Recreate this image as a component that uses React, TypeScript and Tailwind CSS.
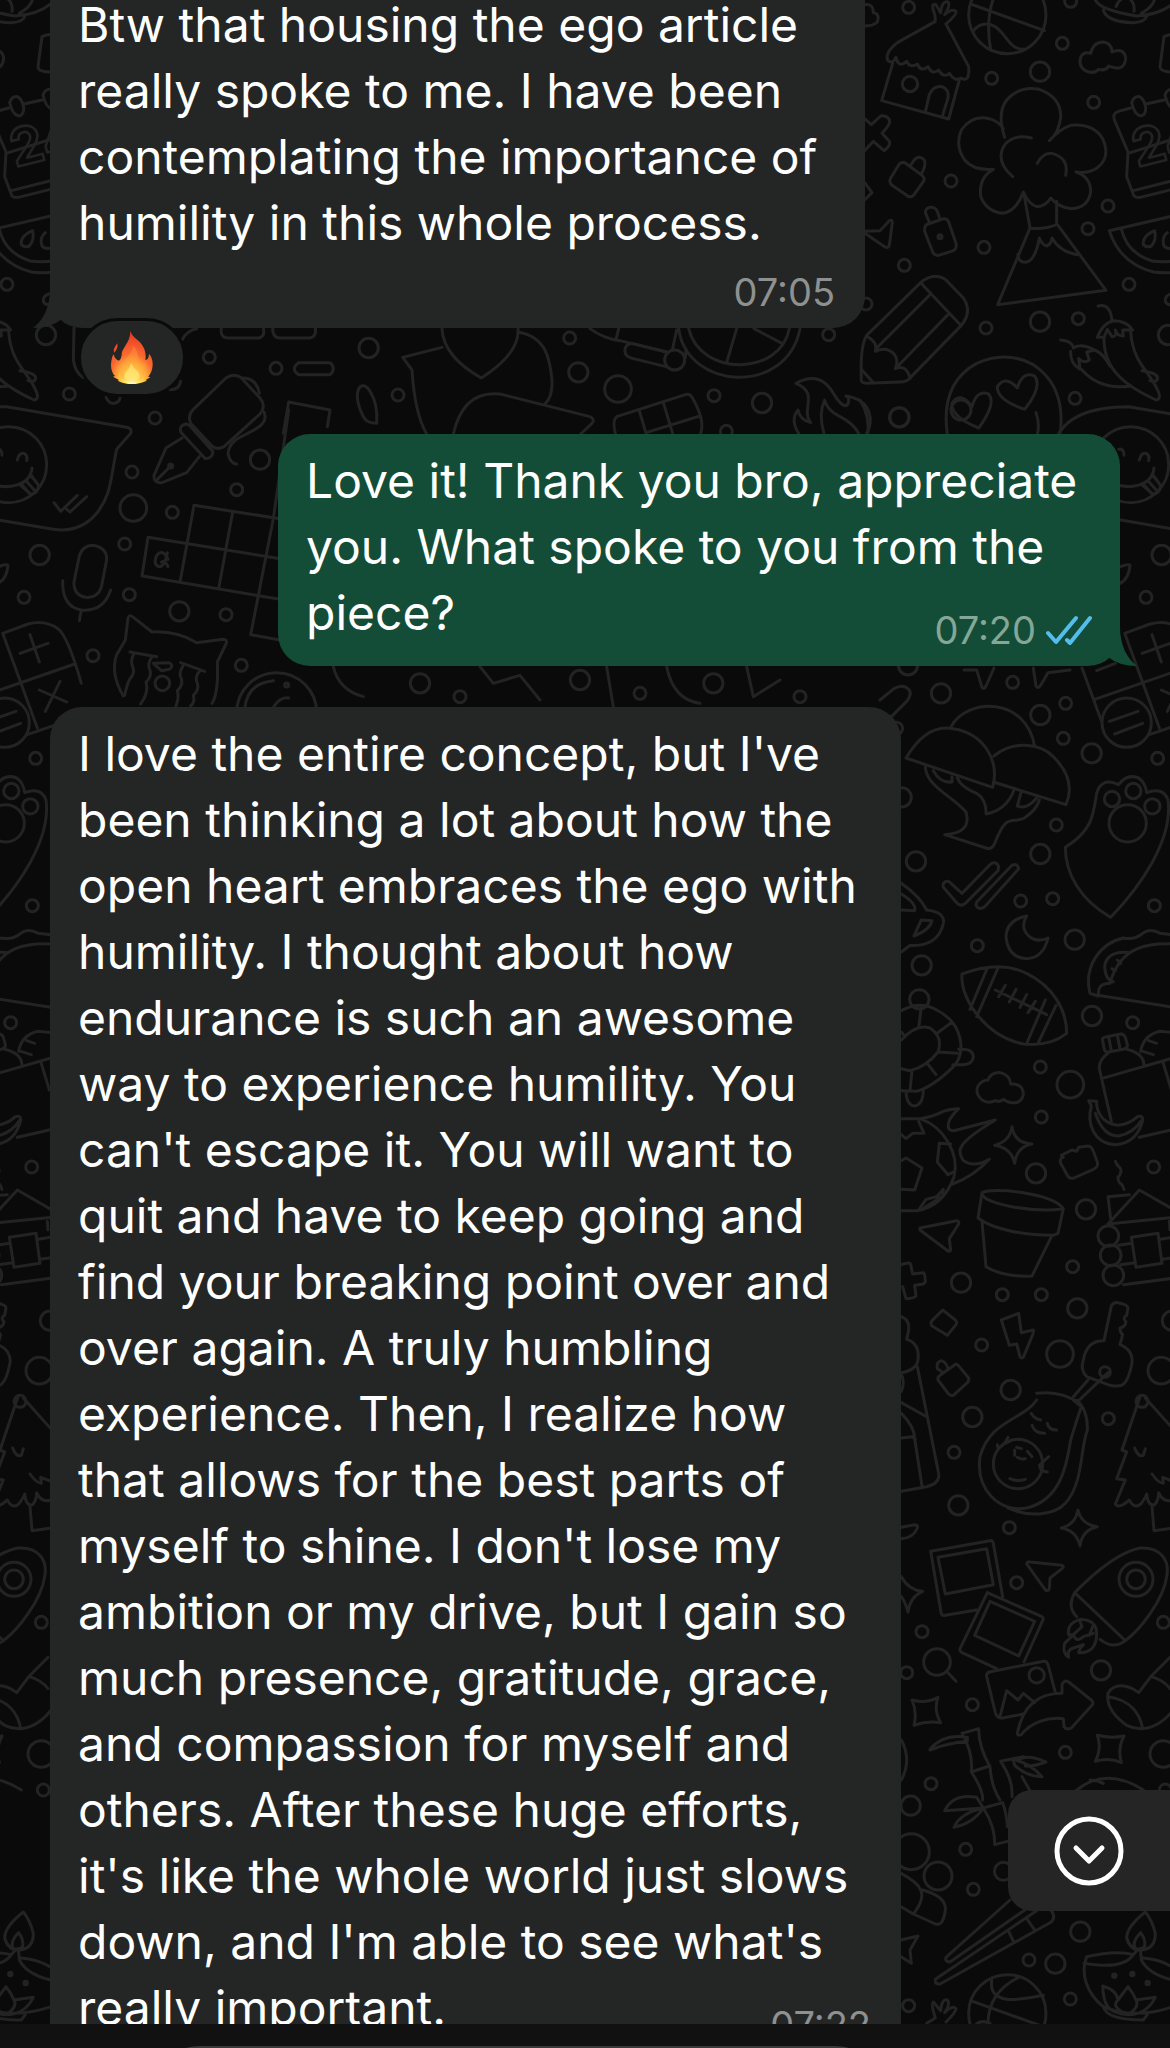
import { useId, type ReactNode } from "react";

type Dot = [x: number, y: number, r: number];

type ChatMessage = {
  id: string;
  text: string;
  time: string;
  outgoing?: boolean;
  tail?: boolean;
  reaction?: boolean;
  className: string;
  metaClassName: string;
};

const messages: ChatMessage[] = [
  {
    id: "ego-article",
    text: "Btw that housing the ego article\nreally spoke to me. I have been\ncontemplating the importance of\nhumility in this whole process.",
    time: "07:05",
    tail: true,
    reaction: true,
    className: "mb-[106px] w-[815px] rounded-b-[32px] bg-[#242626] pr-[30px] pb-3 pl-7",
    metaClassName: "mt-3 text-[#8f9090]"
  },
  {
    id: "thank-you",
    text: "Love it! Thank you bro, appreciate\nyou. What spoke to you from the\npiece?",
    time: "07:20",
    outgoing: true,
    tail: true,
    className: "mb-[41px] w-[842px] self-end rounded-[32px] bg-[#144d37] px-7 pt-[14px] pb-3",
    metaClassName: "mt-[26px] text-[#85a798]"
  },
  {
    id: "humility",
    text: "I love the entire concept, but I've\nbeen thinking a lot about how the\nopen heart embraces the ego with\nhumility. I thought about how\nendurance is such an awesome\nway to experience humility. You\ncan't escape it. You will want to\nquit and have to keep going and\nfind your breaking point over and\nover again. A truly humbling\nexperience. Then, I realize how\nthat allows for the best parts of\nmyself to shine. I don't lose my\nambition or my drive, but I gain so\nmuch presence, gratitude, grace,\nand compassion for myself and\nothers. After these huge efforts,\nit's like the whole world just slows\ndown, and I'm able to see what's\nreally important.",
    time: "07:22",
    className: "w-[851px] rounded-[32px] bg-[#242626] pt-[14px] pr-[30px] pb-3 pl-7",
    metaClassName: "mt-[26px] text-[#8f9090]"
  }
];

// A patch of the wallpaper, drawn on a grid three times finer than the screen
function Patch({ x, y, dots, d, children }: { x: number; y: number; dots: Dot[]; d: string[]; children?: ReactNode }) {
  return (
    <g transform={`translate(${x} ${y}) scale(0.33333)`}>
      {dots.map(([cx, cy, r], i) => <circle key={i} cx={cx} cy={cy} r={r} />)}
      {d.map((path, i) => <path key={i} d={path} />)}
      {children}
    </g>
  );
}

function Doodles({ id }: { id: string }) {
  return (
    <g id={id} fill="none" stroke="#232323" strokeWidth="9" strokeLinecap="round" strokeLinejoin="round">
      <Patch
        x={860}
        y={0}
        dots={[
          [146, 22, 18], [632, 4, 18], [607, 130, 18], [540, 215, 29], [395, 235, 18], [701, 307, 18], [273, 543, 18],
          [744, 618, 18], [684, 686, 18], [372, 742, 18], [133, 796, 18], [807, 853, 18], [18, 912, 18], [540, 965, 29],
          [655, 956, 18], [378, 984, 18], [645, 1195, 18], [118, 1252, 29], [150, 252, 23], [924, 1005, 29], [442, 45, 116],
          [240, 710, 6]
        ]}
        d={[
          // hut
          "M225 65 L112 128 Q72 160 84 182 Q98 194 108 172 Q116 206 140 184 Q150 206 172 192 Q184 218 204 200 Q218 226 236 210 Q250 236 268 220 Q284 246 302 234 Q330 250 326 200 L258 72",
          "M225 65 Q228 50 220 30 Q214 8 228 14 L242 38 Q246 0 264 6 Q272 16 254 44 Q276 24 288 34 Q292 42 258 72",
          "M98 190 L65 302 L266 357 L298 240 M196 336 L208 284 Q220 256 246 260 Q268 268 264 294 L248 346",
          // basketball
          "M332 12 L553 92 M402 -10 Q376 60 392 150 M340 92 Q362 66 392 74 C440 90 440 150 494 148",
          // cloud
          "M692 160 Q700 126 730 126 Q756 130 756 156 Q790 142 797 172 Q796 206 768 204 Q750 200 746 198 Q738 214 716 208 Q700 224 676 212 Q654 198 662 172 Q670 154 692 160",
          // wall mark
          "M14 356 L34 374 L62 348 Q76 344 88 358 Q94 370 66 400 L88 424 Q94 436 72 452 L40 424 L14 452 M14 548 L36 578 L14 600",
          // padlocks
          "M118 492 Q128 482 140 492 L186 526 Q198 536 188 548 L162 584 Q152 596 140 586 L96 556 Q86 546 92 534Z M150 498 L164 478 Q180 464 194 482 Q198 498 184 522",
          "M204 672 L252 656 Q262 656 266 666 L288 730 Q292 744 280 752 L236 766 Q224 768 218 756 L194 694 Q192 676 204 672Z M208 666 L196 638 Q198 620 216 622 Q230 624 234 640 L240 658",
          "M14 694 L60 692 L88 662 Q98 658 97 668 L88 736 Q84 746 74 740 L18 702",
          // volcano and its smoke
          "M434 412 Q410 340 440 300 Q480 256 538 268 Q604 292 602 352 Q596 400 568 422 Q600 386 632 376 Q700 370 728 416 Q752 470 716 500 Q692 522 648 516 Q692 530 692 576 Q684 624 634 626 Q596 622 572 594 Q556 620 530 620 Q506 612 490 576 Q468 636 426 640 Q376 632 362 588 Q356 532 400 508 Q340 512 314 480 Q284 436 304 390 Q336 344 388 356 Q416 364 430 386",
          "M514 414 Q462 402 436 432 Q402 480 458 530 M532 490 Q548 458 576 460 Q628 474 617 526",
          "M492 582 L510 684 Q550 690 590 674 L590 604 M510 684 L413 914 L738 871 L594 676",
          "M474 762 Q474 790 500 786 Q526 780 538 714 Q548 736 560 738 Q574 732 576 714 Q600 756 652 764",
          // calendar
          "M812 324 L775 334 Q756 340 764 362 L804 456 L800 530 L822 588 Q830 596 850 590 L970 560 M858 312 L912 300 M804 460 L970 408 M820 572 L970 534",
          "M815 308 Q822 288 838 290 Q852 296 857 322 Q858 346 842 348 Q824 346 815 308Z M915 285 Q922 266 938 268 Q952 274 957 300 Q958 324 942 326 Q924 324 915 285Z",
          "M912 110 Q930 100 960 106 M912 110 L900 200 Q900 216 940 216",
          // watermelon
          "M748 692 L990 636 M748 692 Q780 790 880 816 Q940 824 990 806 M784 686 Q800 760 880 784 Q940 790 990 770",
          "M884 692 Q846 708 850 734 Q860 744 874 738 Q890 720 884 692Z M922 698 Q904 712 912 738 Q920 748 940 744",
          "M932 882 Q914 888 916 904 Q920 914 932 914",
          // chillies
          "M714 918 Q752 908 756 964 M712 1012 Q730 966 762 962 Q800 962 818 990 L788 990 L790 1008 Q772 1008 766 990 Q772 1010 756 1010 L742 988 L732 1012Z",
          "M732 1014 C730 1110 800 1160 888 1200 Q900 1200 898 1184 C880 1120 820 1100 812 996 M846 1112 Q898 1120 892 1138 Q888 1148 870 1142",
          "M602 1020 Q636 1022 640 1044 Q660 1028 704 1050 L680 1056 L688 1080 Q672 1092 656 1076 L660 1108 Q630 1090 632 1054 M664 1108 Q720 1172 812 1158 M704 1050 Q730 1060 750 1098",
          // pencil
          "M182 848 Q220 816 256 838 L310 894 Q338 934 304 976 L148 1136 Q140 1146 120 1146 L20 1150 Q0 1148 4 1136 Q0 1040 20 1006 L182 848 L302 976 M208 886 L50 1044 M264 944 L108 1104 M20 1008 Q56 1030 46 1054 Q80 1038 104 1064 Q116 1084 106 1106 Q140 1092 150 1136 M4 1108 L40 1148",
          "M0 1200 Q32 1250 22 1310",
          // heart eyes
          "M262 1304 Q240 1150 350 1090 Q440 1050 520 1094 Q620 1160 600 1304 M528 1238 Q540 1270 532 1304",
          "M356 1284 Q272 1250 276 1210 Q300 1172 336 1220 Q350 1168 386 1182 Q410 1210 356 1284Z M494 1228 Q410 1200 412 1160 Q436 1124 472 1164 Q488 1112 524 1128 Q548 1160 494 1228Z",
          // lamp foot
          "M706 0 Q720 30 830 48 Q900 44 940 10 M730 30 Q740 66 820 68 Q856 66 862 46 M768 20 Q776 -4 800 -10 Q826 4 822 34 M844 40 Q880 20 884 -4 M14 14 Q40 10 40 38 Q60 40 52 66 Q40 78 14 78"
        ]}
      >
        <text x="832" y="502" fontSize="156" transform="rotate(-14 832 502)" className="font-[Inter] font-bold" strokeWidth="8">24</text>
      </Patch>

      <Patch
        x={0}
        y={300}
        dots={[
          [628, 172, 18], [828, 205, 18], [208, 282, 18], [465, 354, 18], [780, 479, 29], [396, 516, 18], [400, 624, 40],
          [517, 637, 18], [710, 569, 18], [374, 732, 18], [119, 765, 29], [72, 892, 18], [388, 884, 18], [538, 934, 29],
          [678, 944, 18], [279, 1067, 18], [724, 1096, 18], [26, 494, 114], [512, 498, 6], [830, 1238, 120], [860, 1155, 6],
          [487, 1150, 22]
        ]}
        d={[
          // speech bubble with smiley
          "M-200 420 Q-160 320 20 320 L380 382 Q398 386 392 400 L350 448 C330 540 336 580 290 640 Q240 700 160 688 L-120 640",
          "M-10 448 Q6 444 6 466 M52 480 Q58 456 72 460 Q84 466 80 482 M-30 550 C20 570 90 560 96 504 M62 556 L92 582 M92 526 L116 556 M78 542 L106 574 M64 552 L92 584 Q114 580 116 556 L94 526",
          "M162 608 L182 634 L232 586 M200 628 L210 636 L260 590",
          // pen
          "M678 234 Q700 218 722 232 L780 294 Q800 318 780 342 L672 440 Q650 452 634 436 L574 372 Q560 350 580 328Z M548 376 Q560 368 570 378 L638 454 Q640 474 616 476 L544 398 Q536 384 548 376Z",
          "M546 414 L498 444 L462 526 Q460 550 486 548 L560 518 L598 470 M472 538 L512 498 M726 234 Q770 234 778 280 M792 336 Q802 360 780 378 C740 410 690 410 684 460 Q690 490 710 492",
          "M222 84 L220 180 Q226 220 250 232 M546 120 Q560 92 590 86 M318 292 Q328 312 342 310 Q358 308 360 294 M508 268 Q536 272 542 244",
          "M664 84 Q660 114 684 114 L776 114 Q796 110 790 84 M818 84 Q818 114 840 114 L930 114 Q950 110 946 84 M896 188 L990 188 Q1010 206 990 224 L896 224 Q870 206 896 188Z",
          // crossword
          "M582 616 L840 656 M444 712 L840 776 M428 828 L840 898 M752 1004 L840 1020 M444 712 L426 828 M582 616 L540 846 M698 636 L656 866 M866 330 L820 656 L752 1004",
          "M504 778 Q488 744 470 766 Q458 796 478 800 Q494 800 502 758 M484 786 Q496 780 504 800",
          // microphone
          "M280 736 Q322 744 320 780 L304 862 Q292 896 256 892 Q220 884 222 846 L238 768 Q248 736 280 736Z M188 842 Q186 920 244 930 Q310 936 332 870 M244 930 L238 962",
          "M-10 802 Q20 790 24 796 Q20 840 -10 852",
          // crying cat
          "M370 1188 Q330 1120 350 1064 L376 1020 L384 954 Q388 942 400 952 L456 996 Q530 992 590 1028 L668 1018 Q684 1018 678 1032 L652 1086 Q656 1180 636 1210 M390 1056 L470 1070 M542 1088 L614 1114",
          "M402 1060 q-12 24 -4 40 q8 20 -8 36 q-10 20 -16 50 M456 1070 q-16 24 -6 40 q6 20 -12 36 q10 30 -16 66 M550 1096 q-16 24 -6 40 q6 20 -12 36 q6 20 -4 46 M602 1110 q-20 20 -10 40 q6 20 -12 36 q6 20 -8 32 M460 1090 L506 1088 Q524 1096 508 1108 L484 1112Z",
          "M734 1228 Q740 1150 820 1142 M820 1222 Q840 1190 866 1194"
        ]}
      />

      <Patch
        x={500}
        y={270}
        dots={[
          [209, 204, 18], [235, 307, 29], [354, 357, 40], [642, 377, 18], [786, 399, 29], [679, 484, 18], [986, 194, 18],
          [1198, 442, 29], [524, 270, 30], [-394, 234, 29], [-306, 375, 18], [1383, 420, 30]
        ]}
        d={[
          "M536 176 C560 360 860 380 900 176 M566 176 C600 320 840 320 868 176 M710 176 L680 278 M762 176 L846 220 M270 176 Q310 206 360 212 L500 246 M356 176 L348 208 M530 180 L518 236 M558 236 L556 264",
          "M500 246 L396 220 Q370 224 376 250 Q380 262 400 266 L498 290",
          "M54 186 C140 200 150 270 156 330 Q158 380 136 400 M54 176 Q60 250 -56 324 Q-170 260 -174 176 M-174 232 L-292 262 L-264 300 Q-256 430 -220 492 M-140 492 Q-110 360 0 372 L270 440 Q286 448 276 460 L242 492",
          "M346 490 Q336 450 350 440 L556 374 Q570 370 576 382 Q616 450 602 490 M418 422 L438 490 M490 398 L518 490 M438 488 L600 438",
          // flame
          "M896 490 Q870 450 894 420 Q900 450 932 458 C900 420 960 370 888 340 Q960 300 1000 370 Q1030 420 1044 402 Q1050 380 1038 378 C1120 390 1120 460 1100 490 M972 490 C960 450 960 420 974 390 Q980 420 1020 440 Q1060 460 1076 490",
          "M-420 350 Q-440 380 -410 440 Q-400 460 -370 460 Q-366 400 -390 364 Q-404 340 -420 350Z M-634 396 L-510 420 L-518 470 M-634 396 L-650 490"
        ]}
      />

      <Patch
        x={280}
        y={600}
        dots={[[420, 250, 29], [540, 290, 18], [900, 240, 29], [1080, 280, 18], [1300, 250, 29], [1560, 290, 18]]}
        d={[
          "M160 200 Q176 270 250 290 M600 200 L640 250 L720 226 L780 300 M1160 200 Q1180 300 1260 310 M1400 200 L1420 290 L1500 240 M980 200 L1000 320"
        ]}
      />

      <Patch
        x={880}
        y={600}
        dots={[
          [84, 196, 29], [183, 280, 29], [398, 247, 18], [557, 310, 18], [481, 345, 29], [550, 415, 18], [635, 460, 29],
          [833, 475, 18], [65, 592, 29], [529, 675, 18], [108, 784, 29], [481, 762, 29], [422, 903, 18], [518, 896, 18],
          [823, 917, 18], [292, 1037, 18], [584, 1019, 29], [125, 1096, 29], [118, 1198, 29], [740, 368, 74], [696, 597, 23],
          [760, 573, 23], [817, 619, 23], [743, 670, 56], [50, 385, 18]
        ]}
        d={[
          "M252 210 L290 210 L306 262 Q312 270 318 258 L342 204 M460 204 L468 258 Q472 268 482 256 L504 218 L570 210 M0 300 L42 266 Q70 250 88 270 Q96 284 80 304 L34 350",
          // calculator
          "M606 204 L664 362 M734 100 L810 72 Q860 58 900 86 Q930 110 970 250 M734 100 L838 384 M644 298 L950 192 M808 404 L930 362 M786 160 L870 130 M816 104 L844 186 M650 212 L706 190 M844 270 L926 306 M906 244 L862 334 M688 364 L774 334 M704 402 L788 370",
          // mushrooms
          "M78 474 Q140 370 220 386 C310 400 360 480 338 562Z M212 382 C260 290 440 290 464 440 M342 468 C400 420 480 430 520 470 Q590 540 558 614 L340 546",
          "M136 502 C140 560 220 590 258 636 Q276 700 194 704 L318 744 Q336 750 344 730 C380 640 390 670 430 656 Q470 630 478 600 M232 532 Q240 560 290 580 Q320 600 318 642 Q380 630 402 570 M160 512 Q180 550 216 546 L216 530 M424 574 L412 618 Q440 630 470 594",
          // double tick
          "M190 862 Q186 842 206 844 L246 880 L332 792 Q350 782 356 800 L354 812 L256 910 Q242 922 230 908Z M290 906 L396 796 Q412 788 416 806 L314 920 Q296 932 288 916Z",
          // moon
          "M440 948 Q380 960 378 1010 Q384 1074 440 1076 Q490 1074 504 1014 Q470 1030 444 1006 Q420 980 440 948Z",
          // paw
          "M556 742 C640 690 640 640 650 580 Q664 530 716 554 Q740 520 776 534 Q796 548 800 578 Q850 560 864 600 C880 720 780 860 692 952 C600 900 556 820 556 742Z",
          "M64 850 Q120 890 140 930 Q196 936 190 970 C180 1020 140 1040 90 1036 L64 1056 M64 882 Q110 910 104 932 L64 930 M124 960 L156 962 Q150 990 102 1008Z",
          // football
          "M246 1122 Q360 1080 440 1120 C520 1160 560 1230 560 1300 Q510 1340 430 1332 C320 1310 240 1200 246 1122Z M322 1104 L270 1228 M354 1104 L290 1250 M496 1200 L442 1326 M528 1216 L474 1330 M346 1170 L500 1244 M376 1156 L356 1190 M408 1168 L388 1206 M440 1184 L420 1222 M466 1204 L444 1238",
          // taco
          "M630 1180 C610 1100 660 1030 730 1014 Q760 1020 780 1006 Q810 980 840 1000 L930 1010 M654 1186 L930 1230 M690 1150 C720 1040 800 1020 930 1036 M752 1058 Q680 1050 674 1100 Q676 1140 700 1146 M690 1150 Q650 1150 656 1188 M630 1180 L654 1188 M696 1106 L706 1112 M712 1080 L722 1090"
        ]}
      />

      <Patch
        x={880}
        y={1000}
        dots={[
          [636, 48, 29], [758, 68, 18], [481, 201, 18], [571, 254, 40], [484, 351, 18], [468, 520, 29], [821, 501, 18],
          [618, 628, 29], [578, 800, 18], [243, 848, 29], [367, 884, 18], [484, 884, 18], [592, 925, 29], [305, 1035, 18],
          [540, 1062, 40], [392, 1170, 29], [876, 962, 29], [844, 1112, 40], [786, 1204, 18], [685, 708, 31], [692, 766, 31],
          [700, 826, 31], [675, 1116, 16]
        ]}
        d={[
          // turtle
          "M64 32 Q120 0 170 30 C250 70 260 160 220 200 Q160 260 110 274 L64 272 M64 120 Q110 70 150 84 Q190 110 174 156 Q140 200 90 212 L64 206 M124 20 L116 84 M214 68 L168 102 M232 160 L176 156 M140 188 L168 224 M96 212 L90 272 M64 96 L76 110 M236 148 Q280 144 280 172 Q276 196 244 194 L218 194 M130 268 Q130 314 104 318 Q80 316 78 276",
          // cloud
          "M324 240 Q334 216 362 218 Q390 226 392 252 Q430 250 430 284 Q424 312 394 308 Q376 304 372 298 Q358 308 346 302 Q324 312 306 300 Q284 280 294 258 Q306 240 324 240",
          // burning ball
          "M64 356 L120 356 C190 380 240 460 222 530 Q190 620 110 632 L64 632 M120 356 Q160 350 190 334 Q210 326 236 326 C190 370 200 400 230 390 L346 360 C230 430 230 450 250 482 Q280 504 328 478 Q280 530 218 552",
          "M64 482 L78 474 L126 504 L104 570 L64 568 M64 404 L78 416 L98 400 L132 400 L116 364 M178 430 L212 432 M178 430 L172 486 L204 524 L220 516 M116 630 L138 598 L170 590 L190 568 L188 588 L132 624",
          // sparkle
          "M396 380 Q404 430 456 432 Q410 440 404 490 Q394 444 344 436 Q390 424 396 380Z",
          "M544 466 L576 450 L590 454 L596 442 L624 438 Q634 438 640 454 L652 486 Q656 500 640 508 L582 534 Q568 538 562 526 L542 490 Q538 474 550 472Z",
          // groceries
          "M668 122 Q664 112 680 110 L722 102 Q732 102 736 112 L742 134 Q744 144 730 148 L686 156 Q674 158 672 144Z M686 110 L694 152 M712 106 L720 146 M684 160 Q656 180 658 206 L694 364 M740 148 Q790 160 792 194 M664 236 L900 168 M782 154 Q790 106 840 94 L900 100 M806 122 L830 130 M788 154 L820 164 M850 190 L874 270 M778 412 L900 384",
          "M626 302 L650 304 L650 316 Q660 370 714 376 Q750 372 772 350 Q790 344 788 362 Q770 430 706 434 C640 430 620 370 634 318Z M646 340 Q670 410 716 408 Q760 400 784 362",
          // flower pot
          "M306 578 C300 610 460 640 550 626 C520 580 340 560 306 578Z M306 578 L294 654 C340 690 440 706 520 706 L534 700 L550 626 M306 664 L318 800 Q370 832 456 828 L516 706",
          "M706 484 q4 12 16 22 q4 12 -8 26 q0 16 12 22 l6 14",
          // cabin
          "M748 584 L684 590 L692 656 M684 672 L778 570 L900 640 M684 672 L900 650 M716 736 L756 730 M722 794 L764 788 M730 854 L900 832 M754 712 L834 700 L846 790 L768 802Z M840 718 L900 708 M846 778 L900 770 M868 664 L870 690",
          // cursor
          "M120 684 L230 662 Q238 662 236 672 L208 716 L212 750 Q206 758 200 750 L120 690Z",
          "M64 794 Q90 784 92 794 L98 822 L130 818 Q136 824 136 846 L130 852 L104 856 L108 888 Q100 896 78 896 L68 860",
          "M188 930 L226 960 Q232 966 228 974 L202 1006 L156 978 Q150 970 156 962Z M364 960 L416 940 L424 998 L460 990 Q462 994 458 1004 L430 1072 Q424 1076 420 1070 L410 1032 L388 1036Z",
          "M174 1140 Q172 1130 180 1126 L228 1092 Q234 1094 238 1100 L266 1134 Q268 1142 262 1148 L220 1186 Q212 1188 206 1182Z M190 1118 L172 1106 Q168 1086 184 1082 Q200 1086 204 1108",
          // key
          "M672 1022 L694 918 Q700 906 714 908 Q744 914 744 924 L740 946 Q726 952 738 966 Q736 980 720 984 Q720 998 728 1004 L720 1034 Q760 1050 756 1090 C740 1170 720 1160 690 1156 L620 1130 Q600 1110 610 1080 Q620 1020 672 1022Z M684 1118 L598 1200 M624 1140 L580 1190",
          "M64 950 Q90 960 86 990 L80 1018 Q120 1030 114 1080 Q110 1110 64 1118 M64 1124 Q76 1146 64 1174 M112 1100 L132 1200"
        ]}
      />

      <Patch
        x={880}
        y={1400}
        dots={[
          [277, 51, 29], [685, 56, 18], [222, 157, 18], [235, 316, 29], [388, 383, 18], [410, 548, 18], [850, 667, 18],
          [126, 695, 18], [171, 786, 40], [80, 818, 18], [663, 811, 29], [277, 914, 18], [556, 1057, 18], [153, 1151, 18],
          [850, 1062, 40], [470, 826, 23], [768, 538, 51], [768, 538, 28], [414, 192, 74]
        ]}
        d={[
          "M64 8 L136 48 M132 0 L176 220 Q180 250 140 260 L64 274 M64 40 Q104 80 104 116 L126 258 M64 114 L96 110 L106 118",
          // avocado
          "M470 0 C430 60 330 60 300 170 C286 270 360 340 440 324 C540 300 560 200 572 120 Q590 60 604 20 L580 0 M384 324 C440 350 520 350 556 310 C610 250 600 150 622 90 Q624 30 590 0 M470 -20 Q540 -30 600 10",
          "M352 134 L354 144 Q370 140 384 112 M376 130 L392 122 M506 170 L478 196 L484 212 L502 216 M404 150 L404 166 M410 142 L424 146 M442 154 L456 170 M412 172 Q424 180 436 176 M390 236 Q410 246 436 238 M454 40 Q462 56 482 60 M456 76 Q464 100 494 100 M502 70 Q506 90 530 90",
          // tree
          "M780 -10 L726 150 L740 156 L710 236 L736 240 L706 312 Q716 328 748 300 Q764 330 784 310 Q798 290 800 282 Q804 320 824 314 Q836 300 836 278 Q850 310 880 300 M796 -6 L900 110 M764 144 Q774 172 790 166 L796 146 M816 222 Q836 250 850 250 L848 232 L880 244 M816 318 L822 392 L880 384",
          "M64 382 L104 374 Q114 374 112 384 Q100 414 64 416",
          // sparkles
          "M594 330 Q604 374 652 380 Q606 390 600 438 Q590 392 544 384 Q586 374 594 330Z M64 530 Q86 570 128 574 Q90 590 84 636 Q76 606 64 590",
          "M96 900 Q136 912 174 892 Q160 930 182 968 Q140 962 102 976 Q112 936 96 900Z M652 1006 Q692 1016 732 1008 Q712 1046 724 1088 Q688 1072 646 1084 Q666 1044 652 1006Z",
          // photos
          "M152 454 L330 422 Q338 420 340 430 L368 590 M152 454 L184 642 Q188 648 196 646 L290 630 M174 472 L320 446 L340 554 L196 582Z",
          "M322 578 L486 650 Q492 654 488 662 L432 786 M322 578 L240 746 Q238 754 246 758 L350 806 M330 604 L464 664 L416 768 L284 706Z",
          "M440 492 Q440 484 450 486 L546 496 Q554 500 546 506 L510 534 L508 566 Q504 576 496 570Z",
          "M204 818 L228 844",
          "M328 816 L490 784 Q500 782 504 794 L526 878 M328 816 Q318 820 320 830 L346 938 Q352 956 368 954 L430 942 M360 950 L380 872 L414 900 L430 880 L464 908",
          "M412 1000 C430 910 480 880 546 880 L546 854 Q552 838 566 846 L634 900 Q644 910 634 918 L574 984 Q560 992 552 980 L550 956 C500 950 450 970 424 1004 Q412 1008 412 1000Z",
          // rocket
          "M584 578 Q700 460 780 444 C840 440 870 480 860 530 C850 600 780 690 736 722 Q700 750 660 718 M584 578 Q560 620 590 650 M584 578 L736 722",
          "M650 700 Q650 660 600 658 Q560 670 566 704 L580 704 L554 730 Q546 760 566 772 Q560 750 580 744 L610 734 Q596 750 596 758 Q650 760 650 700 M600 664 L606 680 L580 704 Q590 730 610 710 L640 700 M638 680 L628 706",
          // sock
          "M870 772 L814 828 L776 878 C740 850 700 850 684 880 Q676 930 740 976 C790 1000 840 980 880 930 M686 890 C750 900 780 940 788 986 M814 830 Q850 840 870 866",
          // bamboo
          "M150 1048 Q190 1000 262 1012 L262 1024 Q200 1030 150 1050Z M246 1000 L296 986 Q296 1040 330 1100 Q334 1160 360 1200 M246 1000 Q280 1060 274 1116 Q310 1170 308 1200 M274 1116 L328 1098 M362 1084 L430 1070 L400 1082 L404 1096 Q440 1130 486 1130 Q450 1090 412 1082 Q440 1060 498 1086 Q460 1100 436 1098 M362 1084 Q400 1140 396 1190 M426 1130 L450 1172",
          "M64 1020 Q96 1080 64 1140"
        ]}
      />

      <Patch
        x={700}
        y={1760}
        dots={[
          [632, 137, 29], [797, 268, 18], [634, 275, 54], [714, 348, 42], [820, 388, 18], [910, 334, 27], [1141, 515, 29],
          [987, 600, 18], [1066, 611, 29], [1111, 717, 18], [626, 737, 18], [922, 760, 116], [1243, 647, 5], [1297, 642, 5],
          [1343, 669, 5], [1396, 90, 18]
        ]}
        d={[
          "M850 144 L908 128 Q920 160 922 200 M850 144 Q886 200 884 254 L922 244 M734 152 Q760 100 830 112 L850 144 L734 152 M850 144 Q780 160 762 202 Q820 190 850 144",
          "M1130 90 Q1220 20 1330 90 M1170 60 Q1190 60 1210 70",
          "M603 340 C660 370 690 400 640 462 L603 440 M668 390 Q740 410 736 450 Q730 500 706 492 L640 462",
          // chopsticks
          "M930 420 L738 592 Q734 606 750 606 L980 446 M1010 452 L706 658 Q704 674 720 672 L1054 486 Q1070 470 1050 448 M926 514 L942 548 M982 478 L1004 510",
          "M603 540 L654 528 L630 570 L634 610 L603 590",
          // basketball
          "M812 722 L1030 800 M956 652 Q860 700 864 800 M876 654 C860 740 960 720 1030 706 M822 800 Q840 776 870 790",
          // hut top
          "M680 790 L706 774 Q692 730 700 726 L722 752 Q726 714 742 720 Q752 730 734 758 Q758 734 768 746 Q768 756 738 786",
          // oil lamp
          "M1336 456 Q1280 500 1280 534 Q1290 570 1320 570 Q1366 570 1366 520 Q1356 480 1336 456Z M1322 518 Q1296 544 1304 564 Q1320 572 1334 560 Q1338 540 1322 518Z",
          "M1300 584 Q1250 570 1160 590 C1140 640 1160 700 1210 740 Q1300 780 1420 740 M1152 610 Q1270 630 1300 584 L1310 572 M1322 574 L1324 600 Q1350 650 1440 664 M1330 594 Q1400 600 1440 640 M1208 678 Q1250 690 1254 720 L1284 680 Q1300 700 1308 720 L1366 712 Q1340 764 1284 764 C1220 760 1210 730 1208 678Z M1284 764 Q1230 740 1254 720 M1284 764 Q1320 740 1308 720 M1210 740 Q1220 780 1330 780 L1342 764"
        ]}
      />
    </g>
  );
}

function Wallpaper() {
  const id = useId();

  return (
    <svg className="absolute inset-0 size-full" aria-hidden="true">
      <Doodles id={id} />
      <use href={`#${id}`} x="-1122" />
      <use href={`#${id}`} x="1122" />
    </svg>
  );
}

function Tail({ outgoing }: { outgoing?: boolean }) {
  return (
    <svg
      viewBox="0 0 60 40"
      className={outgoing ? "absolute -right-[17px] bottom-0 h-10 w-[60px] -scale-x-100 text-[#144d37]" : "absolute -left-[17px] bottom-0 h-10 w-[60px] text-[#242626]"}
      aria-hidden="true"
    >
      <path fill="currentColor" d="M17 0 Q17 27 0 40 Q18 40 29 31 Q40 40 60 40 V0Z" />
    </svg>
  );
}

function FlameIcon() {
  const id = useId();

  return (
    <svg viewBox="0 0 126 160" className="h-[54px] w-[42px]" aria-hidden="true">
      <defs>
        <radialGradient id={id} cx="0.5" cy="0.95" r="0.95">
          <stop offset="0" stopColor="#fffbe0" />
          <stop offset="0.14" stopColor="#fff06a" />
          <stop offset="0.34" stopColor="#ffb83a" />
          <stop offset="0.56" stopColor="#fa6a30" />
          <stop offset="1" stopColor="#ea3420" />
        </radialGradient>
      </defs>
      <path fill="#ee4a28" d="M19 36 Q22 52 10 64 Q4 54 19 36Z" />
      <path
        fill={`url(#${id})`}
        d="M58 0 Q64 16 82 28 C102 46 106 66 103 86 Q114 84 114 67 Q126 80 125 102 C124 116 120 126 112 136 L118 138 L104 146 L108 148 Q84 158 64 158 Q38 158 20 148 L24 146 L6 136 L12 134 C2 124 -2 108 1 90 Q2 76 8 68 Q10 84 24 88 Q30 84 32 72 C30 52 58 36 58 0Z"
      />
      <path fill="#ffa33f" opacity="0.4" d="M66 42 C90 70 74 84 90 100 Q98 104 102 96 Q108 128 88 146 Q60 156 36 144 Q18 124 28 102 Q38 110 44 96 C40 76 66 72 66 42Z" />
      <path fill="#fff07a" opacity="0.6" d="M60 96 Q68 112 78 118 Q90 128 84 144 Q62 162 42 144 Q34 130 48 118 Q58 110 60 96Z" />
    </svg>
  );
}

function ReadTicks() {
  return (
    <svg viewBox="0 0 46 30" className="h-[30px] w-[46px]" role="img" aria-label="Read" fill="none" stroke="#53bdeb" strokeWidth="4" strokeLinecap="round" strokeLinejoin="round">
      <path d="M2 18 L10 27 L30 3 M21 25 L24 28 L44 3" />
    </svg>
  );
}

function Bubble({ message }: { message: ChatMessage }) {
  return (
    <article className={`relative flow-root max-w-full ${message.className}`}>
      {message.tail ? <Tail outgoing={message.outgoing} /> : null}
      <p className="relative text-[48px] leading-[66px] whitespace-pre-line text-white">
        {message.text}
        {/* floats beside the last line when there is room, below it otherwise */}
        <span className={`float-right flex items-center gap-[10px] text-[38px] leading-[48px] ${message.metaClassName}`}>
          <time>{message.time}</time>
          {message.outgoing ? <ReadTicks /> : null}
        </span>
      </p>
      {message.reaction ? (
        <button type="button" aria-label="Fire reaction" className="absolute -bottom-[69px] left-7 flex h-[79px] w-[108px] items-center justify-center rounded-full border-[3px] border-[#0a0a0a] bg-[#242626]">
          <FlameIcon />
        </button>
      ) : null}
    </article>
  );
}

export default function App() {
  return (
    <main className="flex h-screen flex-col overflow-hidden bg-[#111111] font-[Inter,sans-serif]">
      <section className="relative min-h-0 flex-1 overflow-hidden bg-[#0a0a0a]" aria-label="Conversation">
        <Wallpaper />
        <div className="relative -mt-2 flex flex-col items-start px-[50px]">
          {messages.map((message) => <Bubble key={message.id} message={message} />)}
        </div>
        <button type="button" aria-label="Scroll to latest" className="absolute right-0 bottom-[113px] flex h-[121px] w-[162px] items-center rounded-l-[24px] bg-[#252525] pl-[46px]">
          <svg viewBox="0 0 70 70" className="size-[70px]" fill="none" stroke="#ffffff" strokeWidth="5" strokeLinecap="round" strokeLinejoin="round" aria-hidden="true">
            <circle cx="35" cy="35" r="32" />
            <path d="M22 32 L35 45 L48 32" />
          </svg>
        </button>
      </section>
      <footer className="h-6 shrink-0 overflow-hidden bg-[#111111] pt-[22px] pr-[285px] pl-[150px]">
        <input type="text" aria-label="Message" className="block h-[100px] w-full rounded-[50px] border-2 border-[#3a3a3a] bg-[#242626] px-8 text-[48px] text-white outline-none" />
      </footer>
    </main>
  );
}
